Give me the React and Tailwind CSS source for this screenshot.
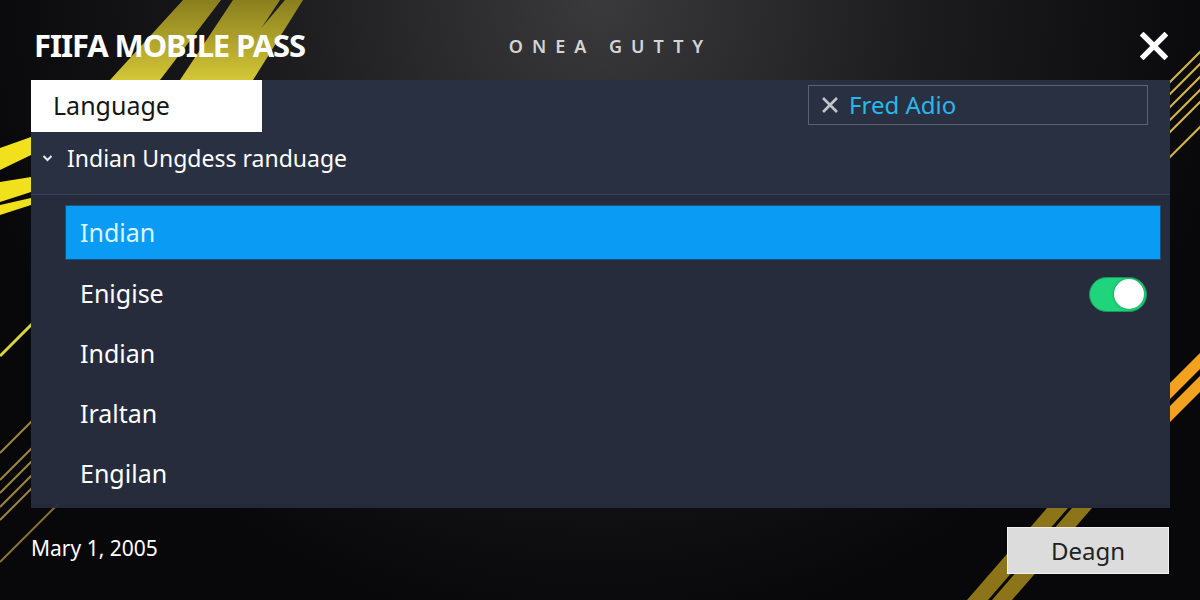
import React, { useState } from "react";

const LANGS = ["Indian", "Enigise", "Indian", "Iraltan", "Engilan"];

function Stripes() {
  return (
    <svg
      className="absolute inset-0 pointer-events-none"
      width="1200"
      height="600"
      viewBox="0 0 1200 600"
    >
      <defs>
        <linearGradient id="gold" x1="0" y1="0" x2="0" y2="1">
          <stop offset="0" stopColor="#8a7e1e" />
          <stop offset="1" stopColor="#d3c636" />
        </linearGradient>
      </defs>
      {/* top-left bands */}
      <polygon points="183,0 221,0 160,80 110,80" fill="url(#gold)" />
      <polygon points="233,0 280,0 227,80 180,80" fill="url(#gold)" />
      <polygon points="285,0 303,0 253,80 217,80" fill="url(#gold)" />
      {/* left edge bands */}
      <polygon points="0,148 31,137 31,155 0,170" fill="#f1e11c" />
      <polygon points="0,182 31,177 31,192 0,202" fill="#f1e11c" />
      <polygon points="0,205 31,198 31,205 0,215" fill="#f1e11c" />
      {/* left thin lines */}
      <line x1="0" y1="356" x2="34" y2="322" stroke="#d9d63c" strokeWidth="3" />
      {[453, 480, 493, 507, 520].map((y) => (
        <line key={y} x1="0" y1={y} x2="40" y2={y - 40} stroke="#b89a48" strokeWidth="2" opacity="0.85" />
      ))}
      <line x1="0" y1="562" x2="70" y2="492" stroke="#a48a44" strokeWidth="2" opacity="0.8" />
      {/* right top thin lines */}
      {[50, 62, 75, 88, 100, 125].map((y) => (
        <line key={y} x1="1168" y1={y + 34} x2="1202" y2={y} stroke="#d4b54a" strokeWidth="2" />
      ))}
      {/* right orange / gold diagonal */}
      <polygon points="1200,353 1200,369 1165,404 1165,388" fill="#f2a21f" />
      <polygon points="1200,376 1200,392 1165,427 1165,411" fill="#f2a21f" />
      <polygon points="1047,508 1068,508 988,600 967,600" fill="#8c7418" />
      <polygon points="1072,508 1092,508 1012,600 992,600" fill="#8c7418" />
    </svg>
  );
}

function CloseIcon({ size, color, width }) {
  return (
    <svg width={size} height={size} viewBox="0 0 24 24">
      <path d="M3 3 L21 21 M21 3 L3 21" stroke={color} strokeWidth={width} strokeLinecap="square" fill="none" />
    </svg>
  );
}

function Toggle({ on, onClick }) {
  return (
    <button
      type="button"
      onClick={onClick}
      className={
        on
          ? "w-[58px] h-[35px] rounded-full bg-[#1fd47b] border border-[#169a5c] flex items-center justify-end pr-[2px]"
          : "w-[58px] h-[35px] rounded-full bg-[#4a5061] border border-[#3a3f4d] flex items-center justify-start pl-[2px]"
      }
    >
      <span className="w-[30px] h-[30px] rounded-full bg-white shadow-[0_0_3px_rgba(0,0,0,0.35)]" />
    </button>
  );
}

export default function App() {
  const [selected, setSelected] = useState(0);
  const [english, setEnglish] = useState(true);

  return (
    <div className="relative w-[1200px] h-[600px] overflow-hidden bg-[radial-gradient(ellipse_at_50%_0%,#3a3a3c_0%,#1c1c1e_38%,#08080b_75%)] font-['Noto_Sans',sans-serif]">
      <Stripes />
      <div className="relative flex flex-col h-full pl-[31px] pr-[30px]">
        {/* header */}
        <div className="h-[80px] grid grid-cols-[1fr_auto_1fr] items-center">
          <div className="pl-[3px] pt-[10px] text-white font-bold text-[31px] tracking-[-0.035em] leading-none">
            FIIFA MOBILE PASS
          </div>
          <div className="ml-[20px] pt-[12px] text-[#d4d4d6] text-[18px] font-semibold tracking-[0.5em] leading-none">
            ONEA GUTTY
          </div>
          <div className="flex justify-end pr-[2px] pt-[12px]">
            <CloseIcon size={28} color="#ffffff" width={4.6} />
          </div>
        </div>

        {/* panel */}
        <div className="h-[428px] flex flex-col bg-[#272d3e]/[0.93]">
          <div className="h-[115px] flex justify-between border-b border-[#3b4152] bg-[#293042]">
            <div className="flex flex-col">
              <div className="w-[231px] h-[52px] bg-white flex items-center pl-[22px] text-[25px] text-[#161616]">
                Language
              </div>
              <div className="h-[52px] flex items-center pl-[11px] gap-[14px] text-white text-[23px]">
                <svg width="11" height="8" viewBox="0 0 11 8">
                  <path d="M1.5 2 L5.5 6 L9.5 2" stroke="#e8eaee" strokeWidth="2" fill="none" />
                </svg>
                <span>Indian Ungdess randuage</span>
              </div>
            </div>
            <div className="mt-[5px] mr-[22px] w-[340px] h-[40px] border border-[#5c6273] flex items-center pl-[13px] gap-[11px]">
              <CloseIcon size={16} color="#c2c5cc" width={4} />
              <span className="text-[24px] text-[#2bb6ec] leading-none">Fred Adio</span>
            </div>
          </div>

          <div className="flex flex-col pt-[7px] pl-[35px] pr-[10px] bg-[#262c3c]">
            {LANGS.map((lang, i) => (
              <div
                key={i}
                className={i === 0 ? "h-[62px] flex items-start pt-[4px]" : "h-[60px] flex items-center"}
                onClick={() => setSelected(i)}
              >
                <div
                  className={
                    i === selected
                      ? "w-full h-[53px] flex items-center justify-between pl-[14px] pr-[13px] bg-[#0a9cf5] ring-1 ring-[#1a4f7c] text-[#dcf5ff] text-[25px]"
                      : "w-full h-[53px] flex items-center justify-between pl-[14px] pr-[13px] text-white text-[25px]"
                  }
                >
                  <span>{lang}</span>
                  {i === 1 && (
                    <Toggle
                      on={english}
                      onClick={(e) => {
                        e.stopPropagation();
                        setEnglish(!english);
                      }}
                    />
                  )}
                </div>
              </div>
            ))}
          </div>
        </div>

        {/* footer */}
        <div className="flex-1 flex items-start justify-between">
          <div className="pt-[25px] text-white text-[21px]">Mary 1, 2005</div>
          <button
            type="button"
            className="mt-[19px] mr-[1px] w-[162px] h-[47px] bg-[#dcdcdc] border border-[#f0f0f0] text-[#222] text-[24px]"
          >
            Deagn
          </button>
        </div>
      </div>
    </div>
  );
}
